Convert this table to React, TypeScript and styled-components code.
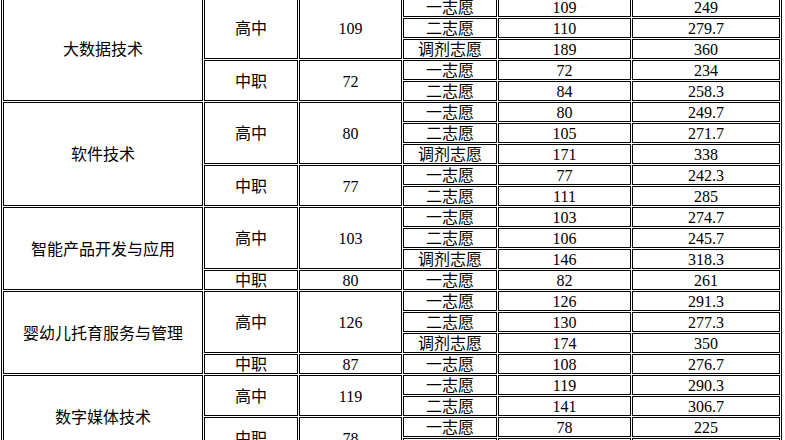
import { createGlobalStyle, styled } from "styled-components";

const GlobalStyle = createGlobalStyle`
  html, body {
    margin: 0;
    padding: 0;
    background: #ffffff;
    overflow: hidden;
  }
`;

const Table = styled.table`
  margin: -5px 0 0 1px;
  width: 781px;
  table-layout: fixed;
  border: 1px solid #000;
  border-collapse: separate;
  border-spacing: 1px;
  font-family: "Liberation Serif", "Noto Sans CJK SC", serif;
  font-size: 16px;
  color: #000;
`;

const Cell = styled.td`
  border: 1px solid #000;
  padding: 2px 0 0;
  height: 16px;
  line-height: 16px;
  text-align: center;
  vertical-align: middle;
  white-space: nowrap;
  overflow: hidden;
`;

type Choice = [string, number, string];
type Group = { level: string; count: number; rows: Choice[] };
type Major = { name: string; groups: Group[] };

const widths = [200, 94, 103, 94, 133, 148];

const majors: Major[] = [
  {
    name: "大数据技术",
    groups: [
      {
        level: "高中",
        count: 109,
        rows: [
          ["一志愿", 109, "249"],
          ["二志愿", 110, "279.7"],
          ["调剂志愿", 189, "360"],
        ],
      },
      {
        level: "中职",
        count: 72,
        rows: [
          ["一志愿", 72, "234"],
          ["二志愿", 84, "258.3"],
        ],
      },
    ],
  },
  {
    name: "软件技术",
    groups: [
      {
        level: "高中",
        count: 80,
        rows: [
          ["一志愿", 80, "249.7"],
          ["二志愿", 105, "271.7"],
          ["调剂志愿", 171, "338"],
        ],
      },
      {
        level: "中职",
        count: 77,
        rows: [
          ["一志愿", 77, "242.3"],
          ["二志愿", 111, "285"],
        ],
      },
    ],
  },
  {
    name: "智能产品开发与应用",
    groups: [
      {
        level: "高中",
        count: 103,
        rows: [
          ["一志愿", 103, "274.7"],
          ["二志愿", 106, "245.7"],
          ["调剂志愿", 146, "318.3"],
        ],
      },
      { level: "中职", count: 80, rows: [["一志愿", 82, "261"]] },
    ],
  },
  {
    name: "婴幼儿托育服务与管理",
    groups: [
      {
        level: "高中",
        count: 126,
        rows: [
          ["一志愿", 126, "291.3"],
          ["二志愿", 130, "277.3"],
          ["调剂志愿", 174, "350"],
        ],
      },
      { level: "中职", count: 87, rows: [["一志愿", 108, "276.7"]] },
    ],
  },
  {
    name: "数字媒体技术",
    groups: [
      {
        level: "高中",
        count: 119,
        rows: [
          ["一志愿", 119, "290.3"],
          ["二志愿", 141, "306.7"],
        ],
      },
      {
        level: "中职",
        count: 78,
        rows: [
          ["一志愿", 78, "225"],
          ["二志愿", 90, "231.3"],
        ],
      },
    ],
  },
];

export default function App() {
  const rows: React.ReactNode[] = [];
  majors.forEach((m) => {
    const total = m.groups.reduce((n, g) => n + g.rows.length, 0);
    m.groups.forEach((g, gi) => {
      g.rows.forEach((r, ri) => {
        rows.push(
          <tr key={`${m.name}-${gi}-${ri}`}>
            {gi === 0 && ri === 0 && <Cell rowSpan={total}>{m.name}</Cell>}
            {ri === 0 && <Cell rowSpan={g.rows.length}>{g.level}</Cell>}
            {ri === 0 && <Cell rowSpan={g.rows.length}>{g.count}</Cell>}
            <Cell>{r[0]}</Cell>
            <Cell>{r[1]}</Cell>
            <Cell>{r[2]}</Cell>
          </tr>
        );
      });
    });
  });

  return (
    <>
      <GlobalStyle />
      <Table>
        <colgroup>
          {widths.map((w, i) => (
            <col key={i} style={{ width: w }} />
          ))}
        </colgroup>
        <tbody>{rows}</tbody>
      </Table>
    </>
  );
}
